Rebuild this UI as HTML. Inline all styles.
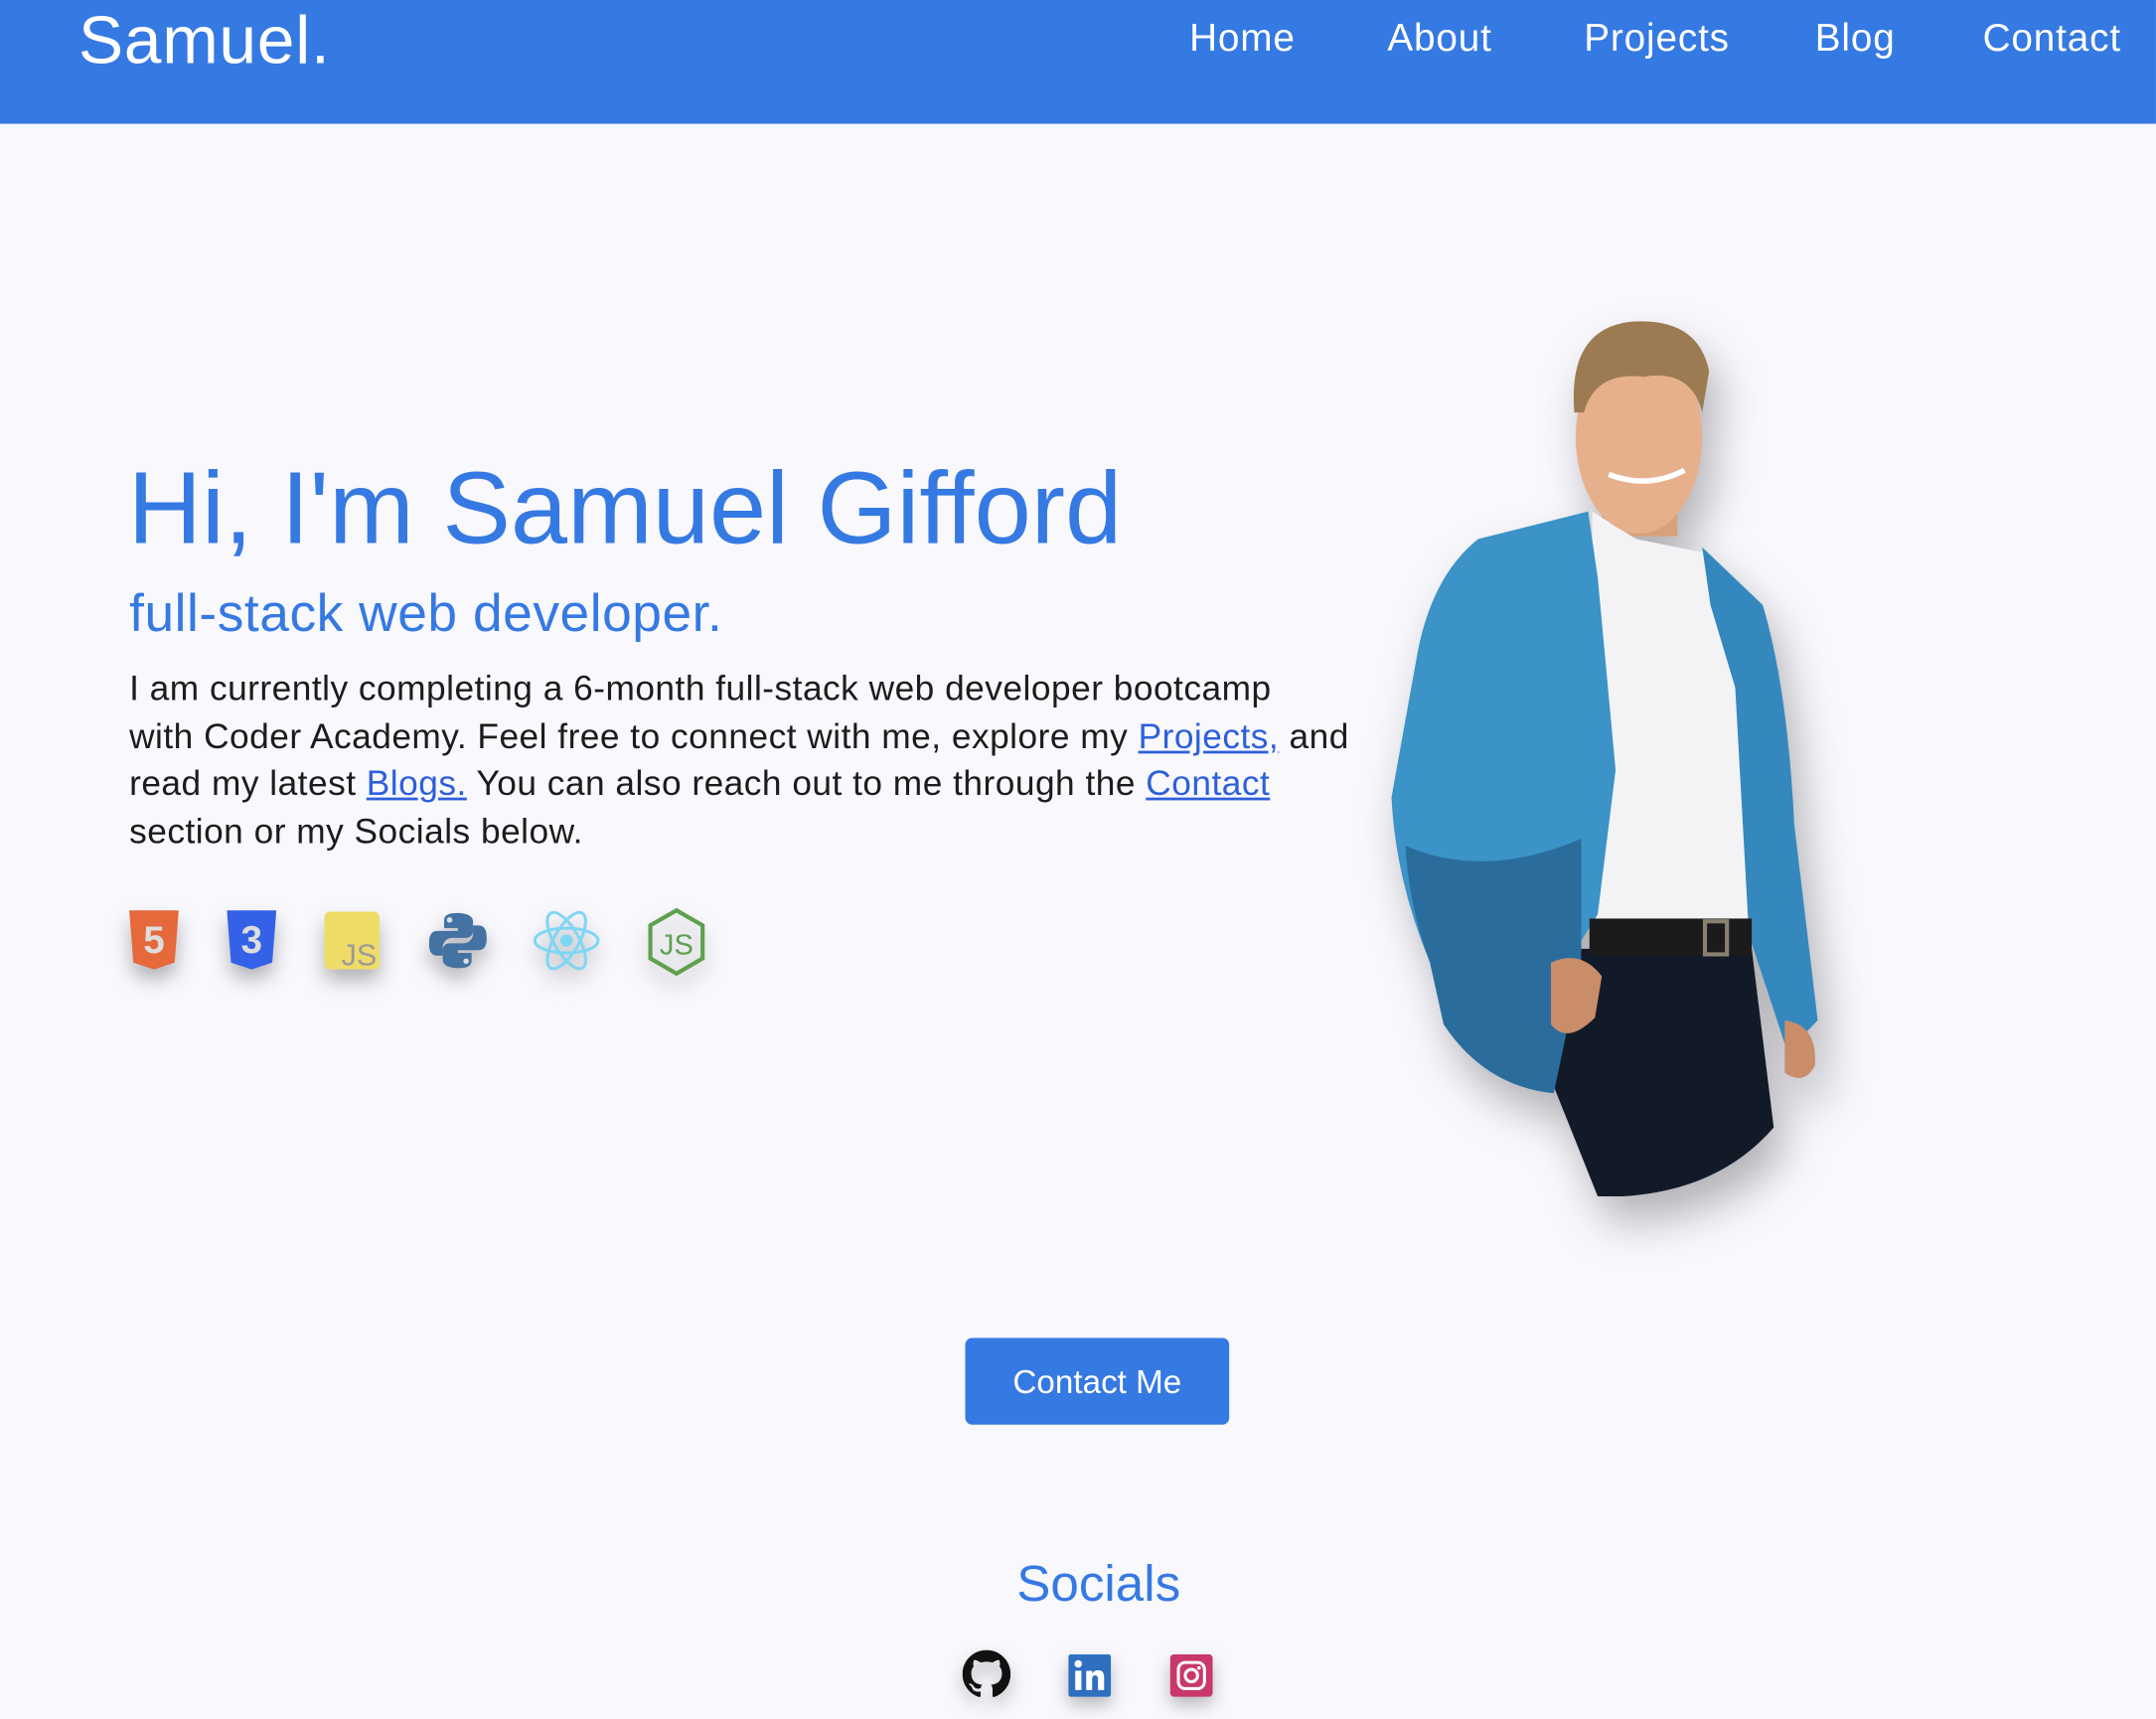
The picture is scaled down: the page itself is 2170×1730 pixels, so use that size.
<!DOCTYPE html>
<html><head><meta charset="utf-8">
<style>
html,body{margin:0;padding:0;}
body{width:2170px;height:1730px;overflow:hidden;background:#f8f8fd;font-family:"Liberation Sans",sans-serif;}
#w{position:absolute;left:0;top:0;width:1568px;height:1250px;transform:scale(1.3839);transform-origin:0 0;}
.nav{position:absolute;left:0;top:0;width:1568px;height:90px;background:#3579e3;}
.logo{position:absolute;left:57px;top:2px;font-size:49px;color:#fff;letter-spacing:0.5px;}
.ni{position:absolute;top:12px;font-size:28px;color:#fff;letter-spacing:0.6px;}
h1{position:absolute;left:93px;top:327px;margin:0;font-weight:normal;font-size:74.3px;color:#3579e3;white-space:nowrap;}
h2{position:absolute;left:94px;top:425px;margin:0;font-weight:normal;font-size:38.5px;color:#3579e3;white-space:nowrap;letter-spacing:0.4px;}
.p{position:absolute;left:94px;top:484px;font-size:25.5px;letter-spacing:0.35px;line-height:34.7px;color:#1c1c1c;white-space:nowrap;}
.p a{color:#2d5fdc;text-decoration:underline;}
.ic{position:absolute;top:662px;filter:drop-shadow(0 8px 7px rgba(0,0,0,.28));}
.btn{position:absolute;left:702px;top:973px;width:192px;height:63px;background:#3579e3;border-radius:5px;color:#fff;font-size:24px;text-align:center;line-height:65px;}
.soc{position:absolute;left:0;width:1598px;text-align:center;top:1131px;font-size:37px;color:#3579e3;}
.si{position:absolute;top:1200px;filter:drop-shadow(0 6px 6px rgba(0,0,0,.25));}
</style></head><body><div id="w">
<div class="nav">
<div class="logo">Samuel.</div>
<div class="ni" style="left:865px">Home</div>
<div class="ni" style="left:1009px">About</div>
<div class="ni" style="left:1152px">Projects</div>
<div class="ni" style="left:1320px">Blog</div>
<div class="ni" style="left:1442px">Contact</div>
</div>

<h1>Hi, I'm Samuel Gifford</h1>
<h2>full-stack web developer.</h2>
<div class="p">I am currently completing a 6-month full-stack web developer bootcamp<br>with Coder Academy. Feel free to connect with me, explore my <a>Projects,</a> and<br>read my latest <a>Blogs.</a> You can also reach out to me through the <a>Contact</a><br>section or my Socials below.</div>

<svg class="ic" style="left:94px" width="36" height="44" viewBox="0 0 36 44"><polygon points="0,0 36,0 33,38 18,43 3,38" fill="#e5693b"/><text x="18" y="31" font-size="28" font-weight="bold" fill="#ddd" text-anchor="middle" font-family="Liberation Sans">5</text></svg>
<svg class="ic" style="left:165px" width="36" height="44" viewBox="0 0 36 44"><polygon points="0,0 36,0 33,38 18,43 3,38" fill="#3461e8"/><text x="18" y="31" font-size="28" font-weight="bold" fill="#ddd" text-anchor="middle" font-family="Liberation Sans">3</text></svg>
<svg class="ic" style="left:236px;top:663px" width="40" height="42" viewBox="0 0 40 42"><rect width="40" height="42" rx="4" fill="#efdc66"/><text x="38" y="39" font-size="22" fill="#9a9a9a" text-anchor="end" font-family="Liberation Sans">JS</text></svg>
<svg class="ic" style="left:312px;top:663px" width="42" height="42" viewBox="0 0 42 42"><path d="M20 1c-9 0-9 4-9 6v5h10v2H6c-4 0-6 3-6 9s2 9 6 9h4v-6c0-4 3-7 7-7h10c3 0 5-2 5-5V7c0-3-3-6-12-6z" fill="#4472a2"/><path d="M22 41c9 0 9-4 9-6v-5H21v-2h15c4 0 6-3 6-9s-2-9-6-9h-4v6c0 4-3 7-7 7H15c-3 0-5 2-5 5v7c0 3 3 6 12 6z" fill="#4472a2"/><circle cx="15" cy="6" r="2" fill="#ddd"/><circle cx="27" cy="36" r="2" fill="#ddd"/></svg>
<svg class="ic" style="left:388px" width="48" height="44" viewBox="0 0 48 44"><g fill="none" stroke="#7fd6f4" stroke-width="2.2"><ellipse cx="24" cy="22" rx="23" ry="9"/><ellipse cx="24" cy="22" rx="23" ry="9" transform="rotate(60 24 22)"/><ellipse cx="24" cy="22" rx="23" ry="9" transform="rotate(-60 24 22)"/></g><circle cx="24" cy="22" r="4.5" fill="#7fd6f4"/></svg>
<svg class="ic" style="left:470px;top:660px" width="44" height="50" viewBox="0 0 44 50"><polygon points="22,2 41,13 41,37 22,48 3,37 3,13" fill="none" stroke="#5fa04e" stroke-width="3"/><text x="22" y="34" font-size="21" fill="#5fa04e" text-anchor="middle" font-family="Liberation Sans">JS</text></svg>

<svg style="position:absolute;left:0;top:0;filter:drop-shadow(8px 18px 16px rgba(0,0,0,.28))" width="1568" height="1250" viewBox="0 0 1568 1250">
<path d="M1150,690 L1274,690 L1290,820 Q1250,866 1180,870 L1162,870 L1130,790 Z" fill="#121a28"/>
<rect x="1165" y="340" width="55" height="50" fill="#d9a07c"/>
<path d="M1158,372 L1190,392 L1240,402 L1276,460 L1274,672 L1158,672 Z" fill="#f3f3f6"/>
<path d="M1155,372 L1075,392 Q1040,420 1030,480 L1012,580 Q1015,640 1040,700 L1050,745 Q1080,790 1130,795 L1140,700 L1162,665 L1175,560 L1162,420 Z" fill="#3b93c7"/>
<path d="M1022,615 Q1080,640 1150,610 L1150,700 L1130,795 Q1080,790 1050,745 L1040,700 Q1025,660 1022,615 Z" fill="#2a6d9d"/>
<path d="M1238,398 L1282,440 Q1300,500 1305,600 L1322,742 L1300,765 L1272,680 L1262,500 L1244,440 Z" fill="#3588bd"/>
<rect x="1156" y="668" width="118" height="27" fill="#1b1b1b"/>
<rect x="1240" y="670" width="16" height="24" fill="none" stroke="#8a8070" stroke-width="3"/>
<path d="M1128,700 Q1150,690 1165,710 L1160,740 Q1140,760 1128,745 Z" fill="#c98d6a"/>
<path d="M1298,742 Q1322,745 1320,775 Q1312,790 1298,780 Z" fill="#c98d6a"/>
<ellipse cx="1192" cy="318" rx="46" ry="70" fill="#e6b08c"/>
<path d="M1145,300 Q1140,240 1185,234 Q1235,230 1243,270 L1238,300 Q1230,268 1195,274 Q1160,270 1152,300 Z" fill="#9c7b52"/>
<path d="M1170,345 Q1198,356 1225,342" stroke="#fff" stroke-width="4" fill="none"/>
</svg>

<div class="btn">Contact Me</div>
<div class="soc">Socials</div>

<svg class="si" style="left:700px" width="35" height="35" viewBox="0 0 16 16"><path fill="#111" d="M8 0C3.58 0 0 3.58 0 8c0 3.540 2.29 6.530 5.470 7.590.4.07.55-.17.55-.38 0-.19-.01-.82-.01-1.49-2.01.37-2.53-.49-2.69-.94-.09-.23-.48-.94-.82-1.130-.28-.15-.68-.52-.01-.53.63-.01 1.08.58 1.23.82.72 1.21 1.870.87 2.330.66.07-.52.28-.87.51-1.07-1.78-.2-3.64-.89-3.64-3.95 0-.87.31-1.59.82-2.15-.08-.2-.36-1.02.08-2.12 0 0 .67-.21 2.2.82.64-.18 1.32-.27 2-.27.68 0 1.36.09 2 .27 1.53-1.04 2.2-.82 2.2-.82.44 1.1.16 1.92.08 2.12.51.56.82 1.27.82 2.15 0 3.07-1.87 3.75-3.65 3.95.29.25.54.73.54 1.48 0 1.07-.01 1.93-.01 2.2 0 .21.15.46.55.38A8.013 8.013 0 0016 8c0-4.42-3.58-8-8-8z"/></svg>
<svg class="si" style="left:777px;top:1203px" width="31" height="31" viewBox="0 0 31 31"><rect width="31" height="31" rx="2" fill="#2e6fc0"/><rect x="5" y="12" width="4.5" height="14" fill="#fff"/><circle cx="7.2" cy="7" r="2.7" fill="#fff"/><path d="M13 12h4.3v2c1-1.6 2.6-2.3 4.5-2.3 3.3 0 4.2 2.2 4.2 5.2V26h-4.5v-8c0-1.8-.6-2.6-2-2.6-1.600 0-2.2 1.1-2.2 2.9V26H13z" fill="#fff"/></svg>
<svg class="si" style="left:851px;top:1203px" width="31" height="31" viewBox="0 0 31 31"><rect width="31" height="31" rx="3" fill="#c8386a"/><rect x="6" y="6" width="19" height="19" rx="5" fill="none" stroke="#fff" stroke-width="2.2"/><circle cx="15.5" cy="15.5" r="4.5" fill="none" stroke="#fff" stroke-width="2.2"/><circle cx="21" cy="10" r="1.3" fill="#fff"/></svg>
</div></body></html>
